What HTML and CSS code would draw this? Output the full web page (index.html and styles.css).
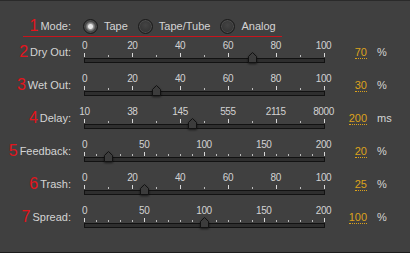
FILE: index.html
```html
<!DOCTYPE html>
<html lang="en">
  <head>
    <meta charset="UTF-8" />
    <title>Tape Delay</title>
    <link rel="stylesheet" href="styles.css">
  </head>
  <body>
    <div class="panel">
      <!-- Mode selector -->
      <div class="mode-row">
        <div class="label"><span class="mark">1</span>Mode:</div>
        <label class="radio checked"><span class="dot"></span>Tape</label>
        <label class="radio"><span class="dot"></span>Tape/Tube</label>
        <label class="radio"><span class="dot"></span>Analog</label>
      </div>

      <!-- Sliders -->
      <div class="row">
        <div class="label"><span class="mark">2</span>Dry Out:</div>
        <div class="slider">
          <div class="nums"><span>0</span><span>20</span><span>40</span><span>60</span><span>80</span><span>100</span></div>
          <div class="ticks"></div>
          <div class="track">
            <svg class="thumb" style="left: 163px" width="9" height="11" viewBox="0 0 9 11"><path d="M0.5 10.5V4.5L4.5 0.5L8.5 4.5V10.5Z" /></svg>
          </div>
        </div>
        <div class="value"><span>70</span></div>
        <div class="unit">%</div>
      </div>

      <div class="row">
        <div class="label"><span class="mark">3</span>Wet Out:</div>
        <div class="slider">
          <div class="nums"><span>0</span><span>20</span><span>40</span><span>60</span><span>80</span><span>100</span></div>
          <div class="ticks"></div>
          <div class="track">
            <svg class="thumb" style="left: 67px" width="9" height="11" viewBox="0 0 9 11"><path d="M0.5 10.5V4.5L4.5 0.5L8.5 4.5V10.5Z" /></svg>
          </div>
        </div>
        <div class="value"><span>30</span></div>
        <div class="unit">%</div>
      </div>

      <div class="row">
        <div class="label"><span class="mark">4</span>Delay:</div>
        <div class="slider">
          <div class="nums"><span>10</span><span>38</span><span>145</span><span>555</span><span>2115</span><span>8000</span></div>
          <div class="ticks"></div>
          <div class="track">
            <svg class="thumb" style="left: 103px" width="9" height="11" viewBox="0 0 9 11"><path d="M0.5 10.5V4.5L4.5 0.5L8.5 4.5V10.5Z" /></svg>
          </div>
        </div>
        <div class="value"><span>200</span></div>
        <div class="unit">ms</div>
      </div>

      <div class="row">
        <div class="label"><span class="mark">5</span>Feedback:</div>
        <div class="slider">
          <div class="nums"><span>0</span><span>50</span><span>100</span><span>150</span><span>200</span></div>
          <div class="ticks fine"></div>
          <div class="track">
            <svg class="thumb" style="left: 19px" width="9" height="11" viewBox="0 0 9 11"><path d="M0.5 10.5V4.5L4.5 0.5L8.5 4.5V10.5Z" /></svg>
          </div>
        </div>
        <div class="value"><span>20</span></div>
        <div class="unit">%</div>
      </div>

      <div class="row">
        <div class="label"><span class="mark">6</span>Trash:</div>
        <div class="slider">
          <div class="nums"><span>0</span><span>20</span><span>40</span><span>60</span><span>80</span><span>100</span></div>
          <div class="ticks"></div>
          <div class="track">
            <svg class="thumb" style="left: 55px" width="9" height="11" viewBox="0 0 9 11"><path d="M0.5 10.5V4.5L4.5 0.5L8.5 4.5V10.5Z" /></svg>
          </div>
        </div>
        <div class="value"><span>25</span></div>
        <div class="unit">%</div>
      </div>

      <div class="row">
        <div class="label"><span class="mark">7</span>Spread:</div>
        <div class="slider">
          <div class="nums"><span>0</span><span>50</span><span>100</span><span>150</span><span>200</span></div>
          <div class="ticks fine"></div>
          <div class="track">
            <svg class="thumb" style="left: 115px" width="9" height="11" viewBox="0 0 9 11"><path d="M0.5 10.5V4.5L4.5 0.5L8.5 4.5V10.5Z" /></svg>
          </div>
        </div>
        <div class="value"><span>100</span></div>
        <div class="unit">%</div>
      </div>
    </div>
  </body>
</html>
```

FILE: styles.css
```css
/* Basic styling */
* {
  margin: 0;
  padding: 0;
  box-sizing: border-box;
}
body {
  background-color: #404040;
  font-family: "Liberation Sans", Arial, sans-serif;
  font-size: 11px;
  color: #d4d4d4;
}
.panel {
  height: 253px;
  padding-top: 15px;
  background-color: #404040;
  border-top: 1px solid #2a2a2a;
  border-bottom: 1px solid #1c1c1c;
}
.label {
  display: flex;
  align-items: center;
  justify-content: flex-end;
  flex-shrink: 0;
  width: 71px;
  height: 24px;
  white-space: nowrap;
}
.mark {
  color: #e3141c;
  font-size: 16px;
  margin-right: 2px;
}

/* Mode row */
.mode-row {
  display: flex;
  align-items: center;
  width: 259px;
  height: 21px;
  margin-left: 23px;
  margin-bottom: 3px;
  border-bottom: 1px solid #c8141c;
}
.mode-row .label {
  width: 48px;
  height: 20px;
}
.radio {
  display: flex;
  align-items: center;
  gap: 6px;
}
.mode-row .label + .radio {
  margin-left: 12px;
}
.radio + .radio {
  margin-left: 10px;
}
.dot {
  width: 15px;
  height: 15px;
  border-radius: 50%;
  border: 1px solid #1a1a1a;
  background: radial-gradient(circle at 50% 40%, #444, #2e2e2e);
  box-shadow: inset 0 0 0 1px #4e4e4e;
}
.radio.checked .dot {
  background: radial-gradient(circle, #e8e8e8 0, #e8e8e8 2px, #9a9a9a 3px, #4c4c4c 5px, #333 7px);
}

/* Slider rows */
.row {
  display: flex;
  align-items: flex-start;
  height: 33px;
}
.slider {
  width: 241px;
  margin-left: 13px;
  flex-shrink: 0;
}
.nums {
  display: flex;
  justify-content: space-between;
  height: 11px;
  padding: 1px 1px 0 0;
  font-size: 10px;
  letter-spacing: -0.4px;
  line-height: 10px;
  color: #d2d2d2;
}
.nums span {
  display: flex;
  justify-content: center;
  width: 1px;
}
.ticks {
  height: 6px;
  background-image: linear-gradient(to right, #d8d8d8 1px, transparent 1px),
    linear-gradient(to right, #bdbdbd 1px, transparent 1px);
  background-size: 48px 4px, 24px 2px;
  background-repeat: repeat-x;
  background-position: 0 100%, 0 100%;
}
.ticks.fine {
  background-size: 60px 4px, 12px 2px;
}
.track {
  position: relative;
  height: 5px;
  margin-top: 1px;
  border: 1px solid #121212;
  background-color: #2e2e2e;
}
.thumb {
  position: absolute;
  top: -7px;
  filter: drop-shadow(0 1px 1px rgba(0, 0, 0, 0.6));
}
.thumb path {
  fill: #3c3c3c;
  stroke: #121212;
  stroke-width: 1;
}
.value {
  width: 42px;
  margin-top: 6px;
  text-align: right;
  flex-shrink: 0;
}
.value span {
  display: inline-block;
  line-height: 12px;
  color: #dca21c;
  border-bottom: 1px dotted #dca21c;
}
.unit {
  margin-top: 6px;
  margin-left: 10px;
  line-height: 12px;
}
```
